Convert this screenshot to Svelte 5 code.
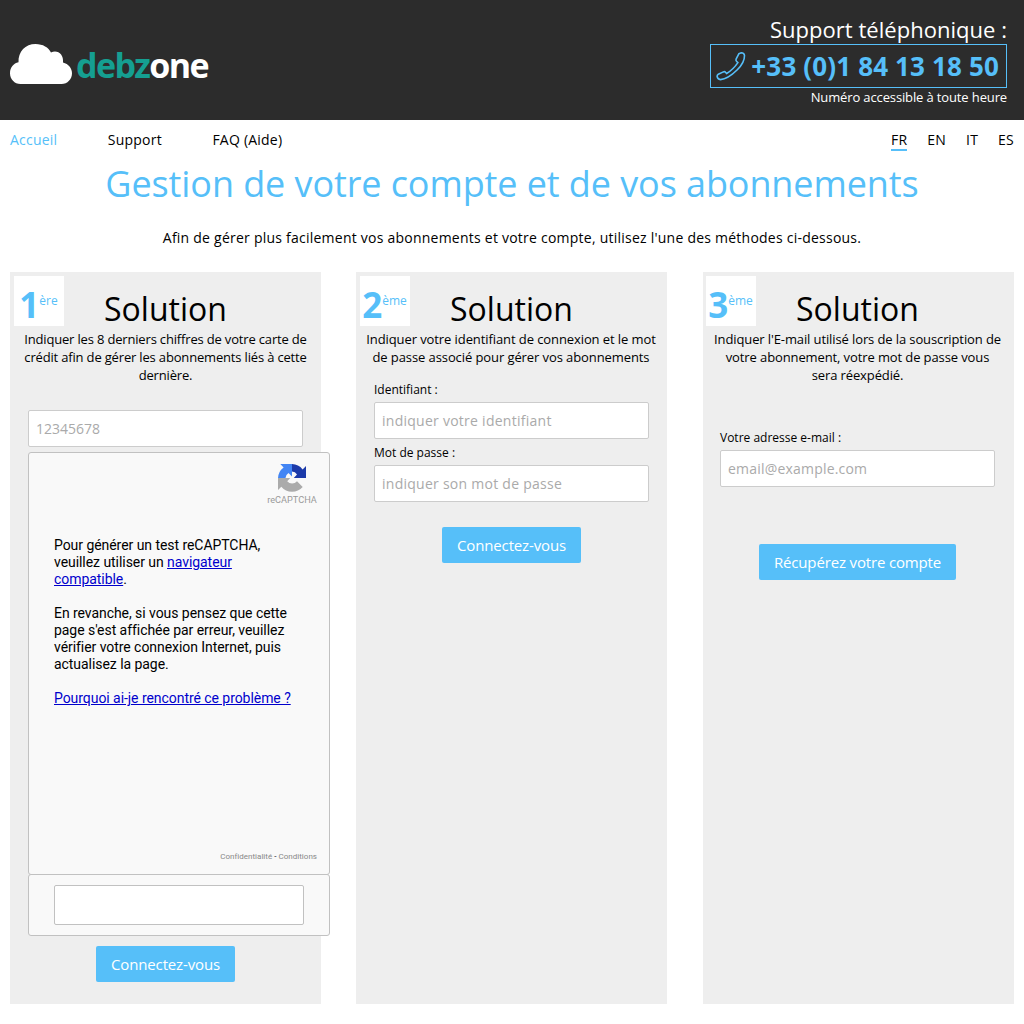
<script>
  const nav = ['Accueil', 'Support', 'FAQ (Aide)'];
  const languages = ['FR', 'EN', 'IT', 'ES'];
</script>

<header>
  <a class="logo" href="#home" aria-label="debzone">
    <svg class="cloud" viewBox="0 0 62 40" aria-hidden="true">
      <path d="M10.500 40C4.500 40 0 35 0 29.200 0 23.500 3.500 19.300 8.500 18.300 8 7.500 15.500 0 25.500 0 33 0 38.500 3.500 41 8.500 47.500 5.200 54 10.500 53 18.500 58.500 20 62 24.200 62 29.200 62 35 57.500 40 51.500 40Z" />
    </svg>
    <span class="word"><b>debz</b>one</span>
  </a>
  <div class="support">
    <div class="support-title">Support téléphonique :</div>
    <div class="phone">
      <svg viewBox="0 0 30 30" aria-hidden="true">
        <path d="M22.800 2.800 25.200 1.800Q28.300 1.900 28.500 4.500C28.600 9.500 25.800 14.300 21.300 18.800 16 24 10.800 28.300 4.500 28.600Q1.500 28.200 1.100 25.300 1.100 24 2.300 23.300L7.300 20.900Q8.700 20.300 9.500 21.300L10.600 22.500C14.700 20.100 19 15.800 21.900 11.600L20.500 10.200Q19.500 9.200 20.200 7.800Z" />
      </svg>
      <span>+33 (0)1 84 13 18 50</span>
    </div>
    <div class="support-note">Numéro accessible à toute heure</div>
  </div>
</header>

<nav>
  <div class="links">
    {#each nav as item, i}<a href="#{item}" class:active={i === 0}>{item}</a>{/each}
  </div>
  <div class="langs">
    {#each languages as lang, i}<a href="#{lang}" class:current={i === 0}>{lang}</a>{/each}
  </div>
</nav>

<main>
  <h1>Gestion de votre compte et de vos abonnements</h1>
  <p class="intro">Afin de gérer plus facilement vos abonnements et votre compte, utilisez l'une des méthodes ci-dessous.</p>

  <div class="cards">
    <section class="card">
      <div class="badge"><b>1</b><span>ère</span></div>
      <h2>Solution</h2>
      <p class="desc tight">Indiquer les 8 derniers chiffres de votre carte de<br />crédit afin de gérer les abonnements liés à cette<br />dernière.</p>
      <div class="fields first">
        <input class="digits" type="text" placeholder="12345678" />
        <div class="captcha">
          <div class="rc-brand">
            <svg viewBox="0 0 28 28" aria-hidden="true">
              <path fill="#1c3aa9" d="M28 14V2l-3.400 3.400A14 14 0 0 0 14 0v7.600a6.400 6.400 0 0 1 5 3L15.800 14Z" />
              <path fill="#4285f4" d="M14 0H2.300l3.300 3.400A14 14 0 0 0 0 14h7.500a6.400 6.400 0 0 1 3-5l3.500 3.400Z" />
              <path fill="#ababab" d="M0 14v12l3.300-3.300A14 14 0 0 0 24.700 23L19 17.300a6.400 6.400 0 0 1-9.800 0L12.300 14Z" />
            </svg>
            <span>reCAPTCHA</span>
          </div>
          <div class="rc-text">
            <p>Pour générer un test reCAPTCHA,<br />veuillez utiliser un <a href="#navigateur">navigateur<br />compatible</a>.</p>
            <p>En revanche, si vous pensez que cette<br />page s'est affichée par erreur, veuillez<br />vérifier votre connexion Internet, puis<br />actualisez la page.</p>
            <p><a href="#aide">Pourquoi ai-je rencontré ce problème ?</a></p>
          </div>
          <div class="rc-legal"><span>Confidentialité</span> - <span>Conditions</span></div>
        </div>
        <div class="response"><textarea aria-label="Réponse"></textarea></div>
      </div>
      <button class="login-card">Connectez-vous</button>
    </section>

    <section class="card middle">
      <div class="badge"><b>2</b><span>ème</span></div>
      <h2>Solution</h2>
      <p class="desc">Indiquer votre identifiant de connexion et le mot<br />de passe associé pour gérer vos abonnements</p>
      <div class="fields second">
        <label for="ident">Identifiant :</label>
        <input id="ident" type="text" placeholder="indiquer votre identifiant" />
        <label for="pass">Mot de passe :</label>
        <input id="pass" type="password" placeholder="indiquer son mot de passe" />
      </div>
      <button class="login-id">Connectez-vous</button>
    </section>

    <section class="card last">
      <div class="badge narrow"><b>3</b><span>ème</span></div>
      <h2>Solution</h2>
      <p class="desc">Indiquer l'E-mail utilisé lors de la souscription de<br />votre abonnement, votre mot de passe vous<br />sera réexpédié.</p>
      <div class="fields third">
        <label for="mail">Votre adresse e-mail :</label>
        <input id="mail" type="email" placeholder="email@example.com" />
      </div>
      <button class="recover">Récupérez votre compte</button>
    </section>
  </div>
</main>

<style>
  :global(body) {
    margin: 0;
    background: #fff;
    color: #000;
    font-family: 'Open Sans', sans-serif;
    font-size: 14px;
  }
  :global(*) { box-sizing: border-box; }
  header {
    height: 120px;
    background: #2c2c2c;
    color: #fff;
    display: flex;
    justify-content: space-between;
    padding: 15px 17px 0 10px;
  }
  .logo {
    display: flex;
    align-items: flex-start;
    gap: 4px;
    padding-top: 29px;
    height: 70px;
    color: #fff;
    text-decoration: none;
  }
  .cloud { width: 62px; height: 40px; fill: #fff; }
  .word {
    font-size: 34px;
    line-height: 40px;
    font-weight: 700;
    letter-spacing: -1.6px;
    margin-top: 1px;
  }
  .word b { color: #159f91; font-weight: 700; }
  .support { text-align: right; white-space: nowrap; }
  .support-title { font-size: 22px; line-height: 29px; letter-spacing: 0.03px; }
  .phone {
    width: 297px;
    height: 44px;
    border: 1px solid #56bff9;
    color: #56bff9;
    display: flex;
    align-items: center;
    justify-content: space-between;
    padding: 0 7px 0 5px;
    font-size: 26px;
    font-weight: 700;
    letter-spacing: 0.15px;
  }
  .phone svg {
    width: 30px;
    height: 30px;
    fill: none;
    stroke: #56bff9;
    stroke-width: 1.6;
  }
  .support-note { font-size: 13px; line-height: 18px; letter-spacing: -0.13px; }
  nav {
    height: 40px;
    padding: 0 10px;
    display: flex;
    justify-content: space-between;
    align-items: flex-start;
    letter-spacing: 0.22px;
  }
  nav a { color: #000; text-decoration: none; line-height: 19px; }
  nav a.active { color: #56bff9; }
  .links { display: flex; gap: 50.5px; padding-top: 10px; }
  .langs { display: flex; gap: 20px; padding-top: 10px; }
  .langs a { height: 21px; }
  .langs .current { border-bottom: 2px solid #56bff9; }
  main { padding: 0 10px; }
  h1 {
    margin: 0;
    height: 50px;
    line-height: 48px;
    font-size: 36px;
    font-weight: 400;
    letter-spacing: -0.09px;
    color: #56bff9;
    text-align: center;
    white-space: nowrap;
  }
  .intro {
    margin: 18px 0 24px;
    line-height: 20px;
    letter-spacing: 0.235px;
    text-align: center;
  }
  .cards { display: flex; gap: 35px; }
  .card {
    position: relative;
    width: 311px;
    height: 732px;
    background: #eee;
    padding-top: 15px;
    display: flex;
    flex-direction: column;
    align-items: center;
  }
  .last { margin-left: 1px; }
  .badge {
    position: absolute;
    top: 4px;
    left: 4px;
    width: 50px;
    height: 50px;
    background: #fff;
    color: #56bff9;
    display: flex;
    justify-content: center;
    padding-right: 1px;
    line-height: 50px;
  }
  .badge.narrow { left: 3px; }
  .badge b { font-size: 35px; line-height: 57px; }
  .badge span { font-size: 12px; }
  h2 {
    margin: 0;
    font-size: 32px;
    line-height: 44px;
    height: 43px;
    font-weight: 400;
  }
  .last h2 { padding-right: 2px; }
  .desc {
    margin: 0;
    font-size: 13px;
    line-height: 18px;
    letter-spacing: -0.11px;
    text-align: center;
    white-space: nowrap;
  }
  .middle .desc { padding-right: 1px; letter-spacing: -0.09px; }
  .last .desc { padding-right: 2px; }
  .desc.tight { letter-spacing: -0.17px; }
  .fields { align-self: flex-start; margin-left: 18px; width: 275px; }
  .third { margin-left: 17px; }
  .first { margin-top: 26px; }
  .second { margin-top: 16px; }
  .third { margin-top: 46px; }
  label { display: block; font-size: 12px; line-height: 16px; height: 20px; }
  input {
    display: block;
    width: 275px;
    height: 37px;
    border: 1px solid #ccc;
    border-radius: 2px;
    background: #fff;
    padding: 0 7px;
    font: 14px 'Open Sans', sans-serif;
    letter-spacing: 0.26px;
  }
  .third input { letter-spacing: 0.2px; }
  input.digits { letter-spacing: 0; }
  input::placeholder { color: #aaa; opacity: 1; }
  input + label { margin-top: 6px; }
  button {
    height: 36px;
    border: 0;
    border-radius: 2px;
    padding: 0 15px;
    background: #56bff9;
    color: #fff;
    font: 15px 'Open Sans', sans-serif;
    letter-spacing: -0.15px;
    white-space: nowrap;
  }
  .login-card { margin-top: 10px; }
  .login-id { margin-top: 25px; }
  .recover { margin: 57px 2px 0 0; }
  .captcha {
    width: 302px;
    height: 423px;
    margin-top: 5px;
    border: 1px solid #c1c1c1;
    border-radius: 3px;
    background: #f9f9f9;
    font-family: Roboto, sans-serif;
    display: flex;
    flex-direction: column;
  }
  .rc-brand {
    align-self: flex-end;
    width: 50px;
    margin: 11px 12px 0 0;
    display: flex;
    flex-direction: column;
    align-items: center;
    color: #999;
    font-size: 9.2px;
    line-height: 12px;
  }
  .rc-brand svg { width: 28px; height: 28px; margin-bottom: 2px; }
  .rc-text {
    margin: 31px 0 0 25px;
    font-size: 14px;
    line-height: 17px;
    letter-spacing: -0.055px;
    white-space: nowrap;
  }
  .rc-text p { margin: 0 0 17px; }
  .rc-text a { color: #0000cc; }
  .rc-legal {
    margin: auto 12px 12px auto;
    font-size: 8px;
    line-height: 10px;
    letter-spacing: 0.02px;
  }
  .rc-legal span { color: #888; }
  .response {
    width: 302px;
    height: 62px;
    margin-top: -1px;
    border: 1px solid #c1c1c1;
    border-radius: 3px;
    background: #f9f9f9;
    padding: 10px 25px 0;
  }
  textarea {
    display: block;
    width: 250px;
    height: 40px;
    border: 1px solid #c1c1c1;
    border-radius: 2px;
    background: #fff;
    resize: none;
    margin: 0;
  }
</style>
